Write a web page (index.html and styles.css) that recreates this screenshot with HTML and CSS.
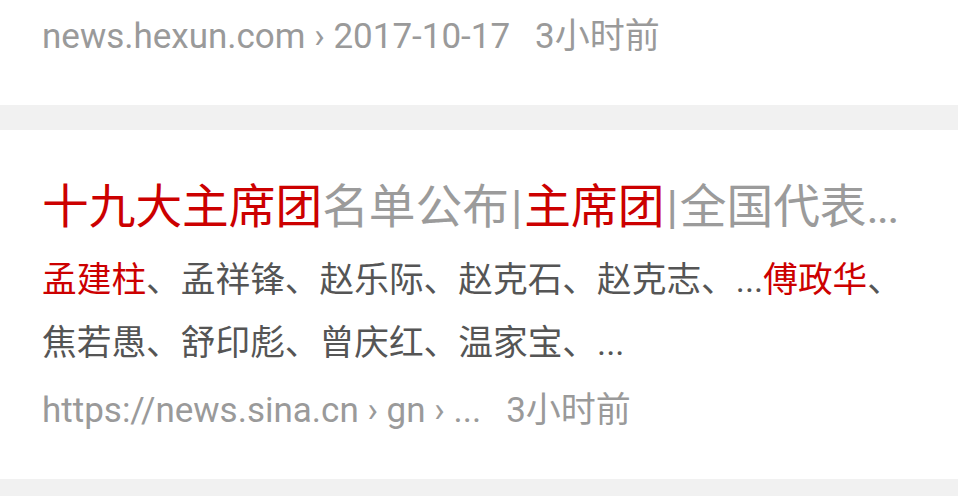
FILE: index.html
```html
<!DOCTYPE html>
<html lang="zh-CN">
<head>
<meta charset="utf-8">
<link rel="stylesheet" href="styles.css">
</head>
<body>
<div class="card card-prev">
  <div class="meta"><span class="src">news.hexun.com › 2017-10-17</span><span class="time">3小时前</span></div>
</div>
<div class="sep"></div>
<div class="card card-main">
  <div class="title"><span class="hl">十九大主席团</span>名单公布<span class="bar">|</span><span class="hl">主席团</span><span class="bar">|</span>全国代表<span class="dots">...</span></div>
  <div class="snippet"><span class="hl">孟建柱</span>、孟祥锋、赵乐际、赵克石、赵克志、...<span class="hl">傅政华</span>、<br>焦若愚、舒印彪、曾庆红、温家宝、...</div>
  <div class="meta"><span class="src">https://news.sina.cn › gn › ...</span><span class="time">3小时前</span></div>
</div>
<div class="sep sep-bottom"></div>
</body>
</html>
```
FILE: styles.css
```css
html, body {
  margin: 0;
  padding: 0;
  background: #ffffff;
}
body {
  font-family: Roboto, "Noto Sans CJK SC", sans-serif;
  width: 958px;
  height: 497px;
  overflow: hidden;
}
.card {
  padding-left: 42px;
  padding-right: 42px;
}
.card-prev {
  height: 105px;
  padding-top: 12px;
  box-sizing: border-box;
}
.meta {
  font-size: 35px;
  line-height: 50px;
  color: #9a9a9a;
  white-space: nowrap;
}
.meta .time {
  margin-left: 25px;
}
.sep {
  height: 25px;
  background: #f1f1f1;
}
.sep-bottom {
  height: 17px;
}
.card-main {
  padding-top: 47px;
  padding-bottom: 43px;
}
.title {
  font-size: 46.7px;
  line-height: 60px;
  color: #9b9b9b;
  white-space: nowrap;
}
.title .bar {
  display: inline-block;
  padding: 0 2px;
}
.title .dots {
  letter-spacing: -2px;
}
.hl {
  color: #cc0000;
}
.snippet {
  margin-top: 12px;
  font-size: 34.7px;
  line-height: 63px;
  color: #555555;
  white-space: nowrap;
}
.card-main .meta {
  margin-top: 11px;
}
```
